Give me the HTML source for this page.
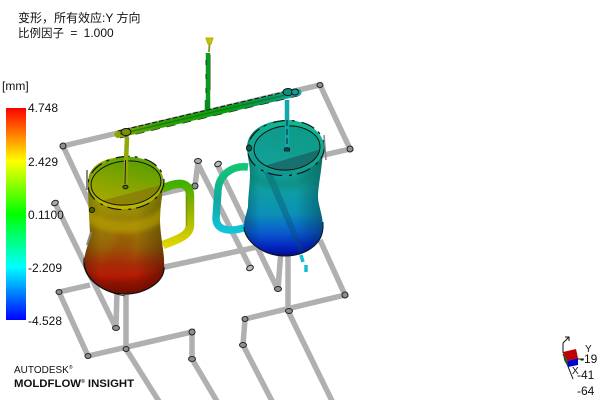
<!DOCTYPE html>
<html><head><meta charset="utf-8">
<style>
html,body{margin:0;padding:0;background:#fff}
#p{position:relative;width:600px;height:400px;overflow:hidden;background:#fff;font-family:"Liberation Sans","Noto Sans CJK SC",sans-serif;color:#111}
svg{position:absolute;left:0;top:0}
.t{position:absolute;font-size:12px;line-height:14px;white-space:pre}
</style></head><body><div id="p">
<svg width="600" height="400" viewBox="0 0 600 400">
<defs>
<linearGradient id="bar" x1="0" y1="0" x2="0" y2="1"><stop offset="0" stop-color="#f00"/><stop offset=".25" stop-color="#ff0"/><stop offset=".5" stop-color="#0f0"/><stop offset=".75" stop-color="#0ff"/><stop offset="1" stop-color="#00f"/></linearGradient>
<linearGradient id="lb" gradientUnits="userSpaceOnUse" x1="125" y1="190" x2="125" y2="293"><stop offset="0" stop-color="#a8a800"/><stop offset=".3" stop-color="#a08808"/><stop offset=".55" stop-color="#a06808"/><stop offset=".72" stop-color="#b03008"/><stop offset=".85" stop-color="#c01c04"/><stop offset="1" stop-color="#801000"/></linearGradient>
<linearGradient id="rb" gradientUnits="userSpaceOnUse" x1="285" y1="150" x2="285" y2="256"><stop offset="0" stop-color="#10a088"/><stop offset=".35" stop-color="#10a8a8"/><stop offset=".6" stop-color="#0c98c0"/><stop offset=".78" stop-color="#0860d8"/><stop offset=".92" stop-color="#0424c8"/><stop offset="1" stop-color="#000c90"/></linearGradient>
<linearGradient id="sh" x1="0" y1="0" x2="1" y2="0"><stop offset="0" stop-color="#000" stop-opacity=".28"/><stop offset=".2" stop-color="#000" stop-opacity=".05"/><stop offset=".65" stop-color="#000" stop-opacity=".05"/><stop offset="1" stop-color="#000" stop-opacity=".35"/></linearGradient>
<linearGradient id="lr" gradientUnits="userSpaceOnUse" x1="130" y1="157" x2="122" y2="210"><stop offset="0" stop-color="#58a800"/><stop offset="1" stop-color="#c0b800"/></linearGradient>
<linearGradient id="li" gradientUnits="userSpaceOnUse" x1="135" y1="163" x2="120" y2="205"><stop offset="0" stop-color="#60a000"/><stop offset="1" stop-color="#a8a800"/></linearGradient>
<linearGradient id="rr" gradientUnits="userSpaceOnUse" x1="295" y1="120" x2="280" y2="175"><stop offset="0" stop-color="#10b890"/><stop offset="1" stop-color="#109890"/></linearGradient>
<linearGradient id="ri" gradientUnits="userSpaceOnUse" x1="295" y1="125" x2="280" y2="170"><stop offset="0" stop-color="#0c9a88"/><stop offset="1" stop-color="#14a098"/></linearGradient>
<linearGradient id="lh" gradientUnits="userSpaceOnUse" x1="0" y1="180" x2="0" y2="248"><stop offset="0" stop-color="#38b000"/><stop offset=".4" stop-color="#90b000"/><stop offset="1" stop-color="#e8d800"/></linearGradient>
<linearGradient id="rh" gradientUnits="userSpaceOnUse" x1="0" y1="165" x2="0" y2="235"><stop offset="0" stop-color="#10c870"/><stop offset=".5" stop-color="#10a8a0"/><stop offset="1" stop-color="#10c8e0"/></linearGradient>
<linearGradient id="run" gradientUnits="userSpaceOnUse" x1="118" y1="0" x2="297" y2="0"><stop offset="0" stop-color="#88a800"/><stop offset=".25" stop-color="#30a000"/><stop offset=".6" stop-color="#08a010"/><stop offset=".85" stop-color="#089868"/><stop offset="1" stop-color="#10a8a0"/></linearGradient>
<filter id="b2"><feGaussianBlur stdDeviation="2"/></filter>
<clipPath id="lc"><path d="M88,183 C88,205 90,225 90,237 C88,245 84,255 84,262 C85,280 105,294 125,294 C145,294 165,282 164,267 C165,255 160,235 160,220 C160,205 163,195 163,183 C163,165 145,157 125,157 C105,157 88,165 88,183Z"/></clipPath>
<clipPath id="rc"><path d="M247,148 C248,160 250,165 250,173 C250,185 248,195 248,207 C246,215 244,220 244,227 C244,240 262,256 285,256 C305,256 322,245 323,228 C323,215 318,205 318,197 C318,185 323,165 323,145 C322,130 305,120 285,120 C265,121 247,130 247,148Z"/></clipPath>
<clipPath id="lec"><ellipse cx="126" cy="183" rx="35" ry="22" transform="rotate(-5 126 183)"/></clipPath>
<clipPath id="rec"><ellipse cx="287" cy="148" rx="33" ry="22" transform="rotate(-4 287 148)"/></clipPath>
</defs>

<rect x="6" y="108" width="20" height="212" fill="url(#bar)"/>

<g fill="none" stroke="#b0b0b0" stroke-width="5.5">
<path d="M63,146 L320,85 L350,149 L250,172"/>
<path d="M160,194 L195,186"/>
<path d="M63,146 L100,225"/>
<path d="M55,203 L116,328"/>
<path d="M59,292 L90,285"/>
<path d="M59,292 L88,356 L192,332 L192,359 L218,403"/>
<path d="M126,349 L126,290"/>
<path d="M117,290 L116,328"/>
<path d="M126,349 L160,403"/>
<path d="M198,162 L195,186"/>
<path d="M197,162 L250,267"/>
<path d="M217,164 L277,288"/>
<path d="M160,268 L285,241"/>
<path d="M278,289 L281,250"/>
<path d="M288,250 L288,311 L333,403"/>
<path d="M245,319 L345,295 L320,240"/>
<path d="M245,319 L243,345 L273,403"/>
</g>
<g fill="#8f8f8f" stroke="#222" stroke-width="1">
<ellipse cx="63" cy="146" rx="3" ry="3"/><ellipse cx="55" cy="203" rx="3.5" ry="2.5" fill="#aaa" transform="rotate(-25 55 203)"/>
<ellipse cx="198" cy="161" rx="3.5" ry="2.5" fill="#aaa"/><ellipse cx="218" cy="164" rx="3.5" ry="2.5" fill="#bbb" transform="rotate(-25 218 164)"/>
<ellipse cx="195" cy="186" rx="3" ry="3"/>
<ellipse cx="59" cy="292" rx="3" ry="2.5"/><ellipse cx="116" cy="328" rx="3.5" ry="2.5"/><ellipse cx="88" cy="356" rx="3" ry="2.5"/>
<ellipse cx="126" cy="349" rx="3" ry="2.5"/><ellipse cx="192" cy="332" rx="3" ry="3"/><ellipse cx="192" cy="359" rx="3.5" ry="2.5"/>
<ellipse cx="245" cy="319" rx="3" ry="2.5"/><ellipse cx="243" cy="345" rx="3.5" ry="2.5"/><ellipse cx="289" cy="311" rx="3.5" ry="2.5"/>
<ellipse cx="278" cy="289" rx="3.5" ry="2.5"/><ellipse cx="345" cy="295" rx="3" ry="3"/><ellipse cx="250" cy="268" rx="3.5" ry="2.5" fill="#bbb" transform="rotate(-25 250 268)"/>
<ellipse cx="320" cy="85" rx="3" ry="2.5"/><ellipse cx="350" cy="149" rx="3" ry="3"/>
</g>

<!-- left handle -->
<path d="M162,189 C172,184 190,178 190,196 L190,225 C190,236 176,240 163,245" fill="none" stroke="url(#lh)" stroke-width="8.5" stroke-linecap="butt"/>
<path d="M186.500,196 L186.500,226" fill="none" stroke="#606000" stroke-width="1.500" opacity=".35"/>
<!-- left mug -->
<g clip-path="url(#lc)">
<rect x="80" y="150" width="90" height="150" fill="url(#lb)"/>
<rect x="84" y="150" width="81" height="150" fill="url(#sh)"/>
<path d="M84,205 C105,228 150,228 168,200 L168,216 C150,238 105,238 84,220Z" fill="#c0a800" opacity=".5" filter="url(#b2)"/>
<path d="M120,232 L105,262 L118,282 L135,240Z" fill="#a02800" opacity=".18" filter="url(#b2)"/>
<path d="M84,272 C100,282 145,284 165,266 L165,300 L84,300Z" fill="#600800" opacity=".3" filter="url(#b2)"/>
</g>
<ellipse cx="126" cy="183" rx="37.5" ry="26" fill="url(#lr)" transform="rotate(-5 126 183)"/>
<ellipse cx="126" cy="183" rx="35" ry="22" fill="url(#li)" transform="rotate(-5 126 183)"/>
<g clip-path="url(#lec)"><path d="M85,205 L165,184 L170,215 L85,215Z" fill="#887808" opacity=".75"/></g>
<ellipse cx="126" cy="183" rx="35" ry="22" fill="none" stroke="#111" stroke-width="1" transform="rotate(-5 126 183)"/>
<ellipse cx="126" cy="183" rx="38" ry="26.5" fill="none" stroke="#111" stroke-width="1.2" stroke-dasharray="14 5 3 7" transform="rotate(-5 126 183)"/>
<path d="M84,262 C85,280 105,294 125,294 C145,294 165,282 164,267" fill="none" stroke="#111" stroke-width="1.2"/>
<path d="M84,258 C82,272 92,290 125,296" fill="none" stroke="#111" stroke-width=".8"/>
<path d="M87,170 L87,190 M91,232 L87,245" stroke="#888" stroke-width="2" fill="none"/>
<ellipse cx="92" cy="210" rx="2.5" ry="2.5" fill="#556000" stroke="#111"/>

<!-- right handle -->
<path d="M248,167 C232,165 219,175 218,190 L216,218 C216,232 232,232 247,227" fill="none" stroke="url(#rh)" stroke-width="7.5" stroke-linecap="butt"/>
<!-- right mug -->
<g clip-path="url(#rc)">
<rect x="240" y="115" width="90" height="145" fill="url(#rb)"/>
<rect x="244" y="115" width="80" height="145" fill="url(#sh)"/>
<path d="M264,172 L299,252 L304,250 L272,172Z" fill="#0c4868" opacity=".35"/>
<path d="M246,168 C265,185 305,185 323,160 L323,174 C305,195 265,192 249,180Z" fill="#0a8070" opacity=".4" filter="url(#b2)"/>
</g>
<ellipse cx="286" cy="148" rx="38" ry="27" fill="url(#rr)" transform="rotate(-4 286 148)"/>
<ellipse cx="287" cy="148" rx="33" ry="22" fill="url(#ri)" transform="rotate(-4 287 148)"/>
<g clip-path="url(#rec)"><path d="M250,170 L325,148 L330,180 L250,180Z" fill="#1a6060" opacity=".75"/></g>
<ellipse cx="287" cy="148" rx="33" ry="22" fill="none" stroke="#111" stroke-width="1" transform="rotate(-4 287 148)"/>
<ellipse cx="286" cy="148" rx="38.5" ry="27.5" fill="none" stroke="#111" stroke-width="1.2" stroke-dasharray="14 5 3 7" transform="rotate(-4 286 148)"/>
<path d="M244,227 C244,240 262,256 285,256 C305,256 322,245 323,228 L323,222" fill="none" stroke="#111" stroke-width="1"/>
<ellipse cx="249" cy="148" rx="2.5" ry="3" fill="#0a6050" stroke="#111"/>
<path d="M324,135 L326,160" stroke="#888" stroke-width="1.5"/>
<path d="M301,255 L303,262 M306,265 L306,272" stroke="#10c0d0" stroke-width="3.5" fill="none"/>

<!-- runners -->
<path d="M208,53 L208,100" stroke="#0a9a20" stroke-width="4.5"/>
<path d="M207.500,100 L207.500,113" stroke="#0a8a20" stroke-width="5.5"/>
<path d="M206,60 L206,100" stroke="#111" stroke-width=".8" stroke-dasharray="5 9"/>
<path d="M210.500,55 L210.500,90" stroke="#9a9a9a" stroke-width="1"/>
<path d="M206,38 L213,38 L211,44 L208,44Z" fill="#c8c000" stroke="#b0b000"/>
<path d="M209.500,44 L209,52" stroke="#88a030" stroke-width="2"/>
<path d="M127,137 L125,186" stroke="#90a808" stroke-width="4.500"/>
<path d="M125.500,160 L125,184" stroke="#111" stroke-width=".9"/>
<ellipse cx="125.500" cy="187" rx="2.500" ry="1.800" fill="#667000" stroke="#111"/>
<path d="M287,100 L287,150" stroke="#10a8a8" stroke-width="4.500"/>
<path d="M287,120 L287,149" stroke="#111" stroke-width=".9" stroke-dasharray="6 3"/>
<rect x="284.500" y="148" width="5" height="3" fill="#085050" stroke="#111" stroke-width=".8"/>
<path d="M118,134.500 L298,92.500" stroke="url(#run)" stroke-width="7" stroke-linecap="round"/>
<path d="M118,131 L297,89" stroke="#111" stroke-width="1" stroke-dasharray="5 2"/>
<path d="M120,138 L298,96" stroke="#222" stroke-width=".7" stroke-dasharray="9 7"/>
<path d="M120,134 L294,93" stroke="#0a7010" stroke-width="1.400" opacity=".7"/>
<ellipse cx="126" cy="132" rx="5" ry="3.500" fill="#7a9000" stroke="#111"/>
<ellipse cx="288" cy="92" rx="5" ry="3.500" fill="#089080" stroke="#111"/>
<ellipse cx="295" cy="92" rx="3.500" ry="3" fill="#10a090" stroke="#111"/>

<!-- triad -->
<g fill="none" stroke="#111" stroke-width="1">
<path d="M563,343 L563,353 M563,343 L569,337 M565,337 L569,337 L569,341"/>
<path d="M563,354 L573,379"/>
<path d="M578,359 L584,359"/>
</g>
<path d="M563,352 L576,349 L578,358 L567,361Z" fill="#c00000"/>
<path d="M567,361 L578,358 L578,365 L568,367Z" fill="#0000c8"/>
<path d="M563,352 L567,361 L568,367 L564,360Z" fill="#0a6010"/>
</svg>

<div class="t" style="left:18px;top:11px">变形，所有效应:Y 方向</div>
<div class="t" style="left:18px;top:26px"><span style="font-size:11.500px">比例因子</span><span style="word-spacing:3px"> = 1.000</span></div>
<div class="t" style="left:2px;top:79px">[mm]</div>
<div class="t" style="left:28px;top:101px">4.748</div>
<div class="t" style="left:28px;top:155px">2.429</div>
<div class="t" style="left:28px;top:208px">0.1100</div>
<div class="t" style="left:28px;top:261px">-2.209</div>
<div class="t" style="left:28px;top:314px">-4.528</div>
<div class="t" style="left:14px;top:361px;font-size:10px">AUTODESK<span style="font-size:5px;vertical-align:4px">®</span></div>
<div class="t" style="left:14px;top:375px;font-size:11.400px;font-weight:bold">MOLDFLOW<span style="font-size:5px;vertical-align:4px">®</span> INSIGHT</div>
<div class="t" style="left:585px;top:343px;font-size:10px">Y</div>
<div class="t" style="left:572px;top:365px;font-size:10px">X</div>
<div class="t" style="left:580px;top:352px">-19</div>
<div class="t" style="left:577px;top:368px">-41</div>
<div class="t" style="left:577px;top:384px">-64</div>
</div></body></html>
